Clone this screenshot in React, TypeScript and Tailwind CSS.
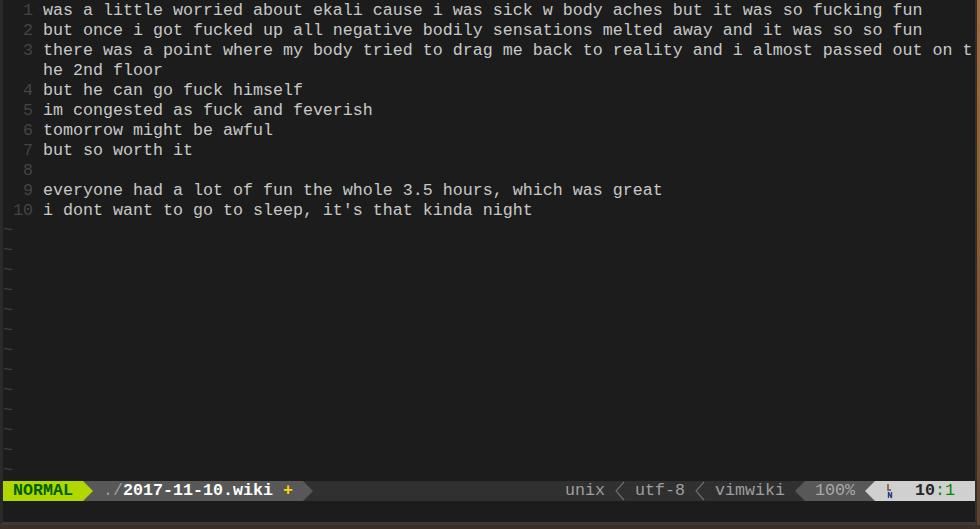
const lines: { num?: number; text: string }[] = [
  { num: 1, text: 'was a little worried about ekali cause i was sick w body aches but it was so fucking fun' },
  { num: 2, text: 'but once i got fucked up all negative bodily sensations melted away and it was so so fun' },
  { num: 3, text: 'there was a point where my body tried to drag me back to reality and i almost passed out on t' },
  { text: 'he 2nd floor' },
  { num: 4, text: 'but he can go fuck himself' },
  { num: 5, text: 'im congested as fuck and feverish' },
  { num: 6, text: 'tomorrow might be awful' },
  { num: 7, text: 'but so worth it' },
  { num: 8, text: '' },
  { num: 9, text: 'everyone had a lot of fun the whole 3.5 hours, which was great' },
  { num: 10, text: "i dont want to go to sleep, it's that kinda night" },
]

const tildes = Array.from({ length: 13 })

function ArrowRight({ fg, bg }: { fg: string; bg: string }) {
  return (
    <svg width="10" height="20" viewBox="0 0 10 20" className="block shrink-0" style={{ background: bg }}>
      <polygon points="0,0 10,10 0,20" fill={fg} />
    </svg>
  )
}

function ArrowLeft({ fg, bg }: { fg: string; bg: string }) {
  return (
    <svg width="10" height="20" viewBox="0 0 10 20" className="block shrink-0" style={{ background: bg }}>
      <polygon points="10,0 0,10 10,20" fill={fg} />
    </svg>
  )
}

function ThinLeft() {
  return (
    <svg width="10" height="20" viewBox="0 0 10 20" className="block shrink-0">
      <polyline points="9,1 1,10 9,19" fill="none" stroke="#6c6c6c" strokeWidth="1.2" />
    </svg>
  )
}

function LineNrGlyph() {
  return (
    <svg width="10" height="20" viewBox="0 0 10 20" className="block shrink-0">
      <path d="M3 3 V9 H6" fill="none" stroke="#6a5034" strokeWidth="1.4" />
      <path d="M3.5 17 V11 L6.5 17 V11" fill="none" stroke="#23408a" strokeWidth="1.4" />
    </svg>
  )
}

export default function App() {
  return (
    <div
      className="w-[980px] h-[529px] overflow-hidden flex bg-[#3e2f24] text-[16.67px] leading-[20px]"
      style={{ fontFamily: '"Liberation Mono", "DejaVu Sans Mono", monospace' }}
    >
      <div className="flex flex-col h-[525px] w-[977px] shrink-0 bg-[#1c1c1c] border-l-[3px] border-l-[#2a2a2a] border-r-[2px] border-r-[#2e2e2e] border-b-[3px] border-b-[#3a3a3a] pt-[1px]">
        {lines.map((l, i) => (
          <div key={i} className="flex h-[20px] whitespace-pre">
            <span className="w-[40px] shrink-0 text-right pr-[10px] text-[#444444]">{l.num ?? ''}</span>
            <span className="text-[#c8c8c8]">{l.text}</span>
          </div>
        ))}
        {tildes.map((_, i) => (
          <div key={i} className="h-[20px] text-[#3e3e3e]">~</div>
        ))}

        <div className="flex h-[20px] whitespace-pre bg-[#303030]">
          <span className="bg-[#afd700] text-[#005f00] font-bold"> NORMAL </span>
          <ArrowRight fg="#afd700" bg="#585858" />
          <span className="bg-[#585858]">
            <span> </span>
            <span className="text-[#9e9e9e]">./</span>
            <span className="text-white font-bold">2017-11-10.wiki</span>
            <span> </span>
            <span className="text-[#ffd700] font-bold">+</span>
            <span> </span>
          </span>
          <ArrowRight fg="#585858" bg="#303030" />
          <span className="flex-1" />
          <span className="text-[#9e9e9e]">unix </span>
          <ThinLeft />
          <span className="text-[#9e9e9e]"> utf-8 </span>
          <ThinLeft />
          <span className="text-[#9e9e9e]"> vimwiki </span>
          <ArrowLeft fg="#585858" bg="#303030" />
          <span className="bg-[#585858] text-[#a8a8a8]"> 100% </span>
          <ArrowLeft fg="#d0d0d0" bg="#585858" />
          <span className="flex bg-[#d0d0d0] w-[100px]">
            <span> </span>
            <LineNrGlyph />
            <span>  </span>
            <span className="text-[#262626] font-bold">10</span>
            <span className="text-[#008700]">:1</span>
          </span>
        </div>
        <div className="h-[20px]" />
        <div className="flex-1" />
      </div>
      <div className="flex-1 h-[525px] bg-gradient-to-b from-[#a46c38] via-[#8a5a30] to-[#5e4330]" />
    </div>
  )
}
